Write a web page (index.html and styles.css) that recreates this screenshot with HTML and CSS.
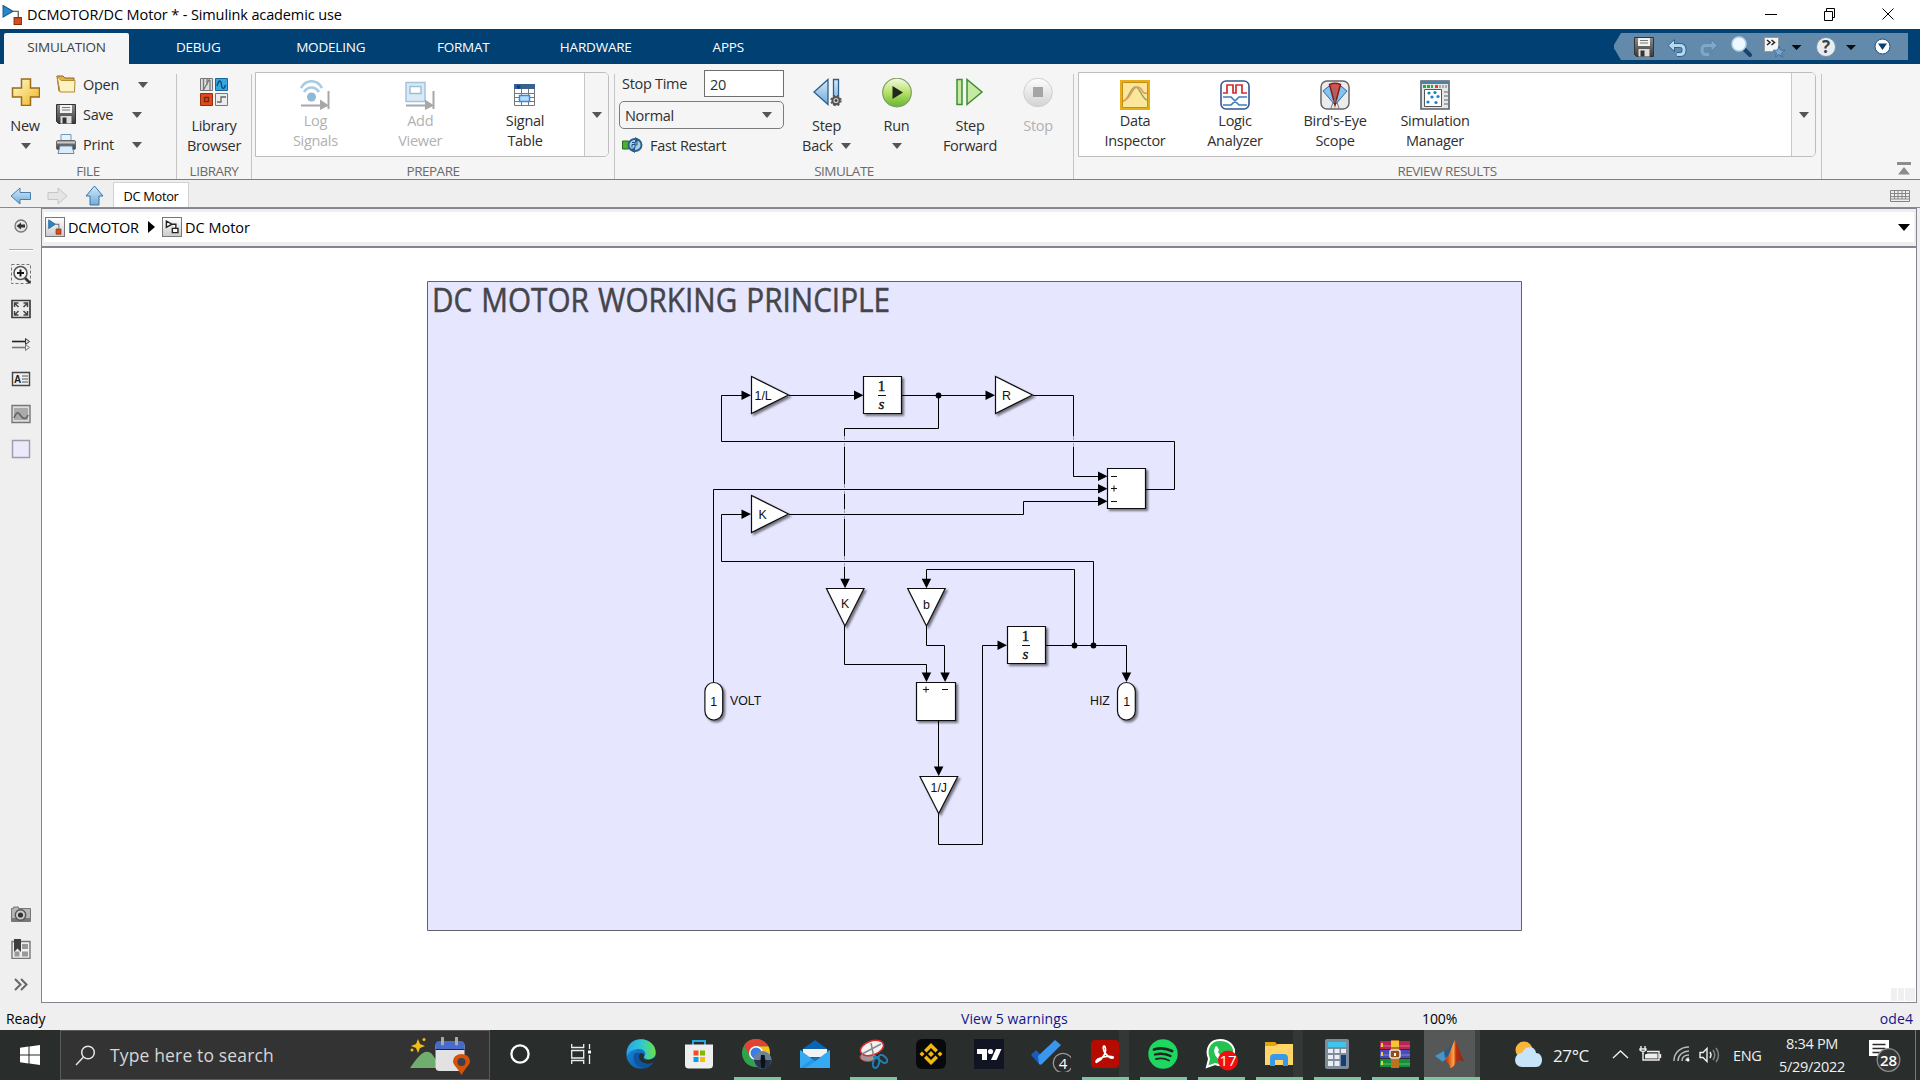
FILE: index.html
```html
<!DOCTYPE html>
<html lang="en">
<head>
<meta charset="utf-8">
<title>DCMOTOR/DC Motor * - Simulink academic use</title>
<link rel="stylesheet" href="styles.css">
</head>
<body>
<svg class="defs" width="0" height="0">
  <defs>
    <linearGradient id="gold" x1="0" y1="0" x2="1" y2="1"><stop offset="0" stop-color="#fffbd0"/><stop offset="1" stop-color="#eeb51c"/></linearGradient>
    <linearGradient id="blue" x1="0" y1="0" x2="0" y2="1"><stop offset="0" stop-color="#d3eafa"/><stop offset="1" stop-color="#71acd9"/></linearGradient>
    <linearGradient id="green" x1="0" y1="0" x2="0" y2="1"><stop offset="0" stop-color="#f4fbe4"/><stop offset=".5" stop-color="#b7e168"/><stop offset="1" stop-color="#63b82e"/></linearGradient>
    <linearGradient id="grey" x1="0" y1="0" x2="0" y2="1"><stop offset="0" stop-color="#fdfdfd"/><stop offset="1" stop-color="#d2d2d2"/></linearGradient>
    <linearGradient id="steel" x1="0" y1="0" x2="0" y2="1"><stop offset="0" stop-color="#8c8c8c"/><stop offset="1" stop-color="#3a3a3a"/></linearGradient>
    <linearGradient id="edge1" x1="0" y1="0" x2="1" y2="0"><stop offset="0" stop-color="#2aa5e6"/><stop offset=".5" stop-color="#2fc7d2"/><stop offset="1" stop-color="#69e04a"/></linearGradient>
    <linearGradient id="edge2" x1="0" y1="0" x2="1" y2="1"><stop offset="0" stop-color="#1690e4"/><stop offset="1" stop-color="#0c4f9c"/></linearGradient>
    <linearGradient id="mat" x1="0" y1="0" x2="1" y2="0"><stop offset="0" stop-color="#7d1d10"/><stop offset=".3" stop-color="#e65c1a"/><stop offset=".5" stop-color="#f9a64a"/><stop offset=".62" stop-color="#b8300f"/><stop offset="1" stop-color="#8c2010"/></linearGradient>
    <filter id="shadow" x="-20%" y="-20%" width="150%" height="150%"><feDropShadow dx="2" dy="2" stdDeviation="1.3" flood-color="#000" flood-opacity=".5"/></filter>
    <symbol id="floppy" viewBox="0 0 20 20"><path d="M.5.5h19v19h-17l-2-2z" fill="url(#steel)" stroke="#333"/><path d="M4 1h12v8H4z" fill="#f2f2f2"/><path d="M6 3.500h8M6 6h8" stroke="#777"/><path d="M4.500 12h11v7.500h-11z" fill="#ddd"/><path d="M6.500 13.500h4v6h-4z" fill="#333"/></symbol>
    <symbol id="model" viewBox="0 0 20 20"><path d="M1 1l9.500 5.500L1 12z" fill="#2a86c4" stroke="#15598c"/><path d="M10.500 6.500h5V12" fill="none" stroke="#666" stroke-width="1.300"/><path d="M11.500 12.500h7v6.500h-7z" fill="#d84d1c" stroke="#8a2d0c"/></symbol>
  </defs>
</svg>

<header class="titlebar">
  <svg class="app-icon" width="21" height="24" viewBox="0 0 20 20"><use href="#model"/></svg>
  <span class="title">DCMOTOR/DC Motor * - Simulink academic use</span>
  <svg class="controls" width="140" height="29" viewBox="0 0 140 29" fill="none" stroke="#000" stroke-width="1"><path d="M5 14.500h12M64.500 11.500h8v9h-8zM66.500 11.500v-3h8v9h-2M122.500 8.500l11 11M133.500 8.500l-11 11"/></svg>
</header>

<nav class="tabs">
  <div class="tab active">SIMULATION</div><div class="tab">DEBUG</div><div class="tab">MODELING</div><div class="tab">FORMAT</div><div class="tab">HARDWARE</div><div class="tab">APPS</div>
  <div class="quick">
    <svg width="294" height="27" viewBox="0 0 294 27">
      <path d="M7 0h287v27H7L-1 13.500z" fill="#6389ab"/>
      <use href="#floppy" x="20" y="4" width="20" height="20"/>
      <g fill="none" stroke="#2f6290" stroke-width="5"><path d="M58 12.500h8q4 0 4 4v1q0 4-4 4h-3"/></g>
      <path d="M60.500 6.500v12L54 12.500z" fill="#b5d8f1" stroke="#2f6290"/><path d="M58 12.500h8q4 0 4 4v1q0 4-4 4h-3" fill="none" stroke="#b5d8f1" stroke-width="3"/>
      <path d="M97 6.500v12l6.500-6z" fill="#80a7c8" stroke="#537fa6"/><path d="M99 12.500h-7q-4 0-4 4v1q0 4 4 4h3" fill="none" stroke="#80a7c8" stroke-width="3"/>
      <path d="M130 16l6 6" stroke="#18436e" stroke-width="4" stroke-linecap="round"/><circle cx="125" cy="11" r="7" fill="#eef8ff" stroke="#b4d2e8" stroke-width="1.500"/>
      <path d="M150.500 4.500h14v14h-14z" fill="#f5f5f5" stroke="#999"/><path d="M153 7l3 2.500-3 2.500M157.500 7l3 2.500-3 2.500" fill="none" stroke="#222" stroke-width="1.500"/><path d="M165 13l1.500 4 4.500.3-3.500 2.700 1 4-3.500-2.500-3.500 2.500 1-4-3.500-2.700 4.500-.3z" fill="#78a9d2" stroke="#3a658f" stroke-width=".8"/>
      <path d="M177.500 12h10l-5 5zM232 12h10l-5 5z" fill="#0b0b0b"/>
      <circle cx="212" cy="14" r="9.500" fill="#e9edf0" stroke="#7593ae"/><text x="212" y="20" text-anchor="middle" class="qmark">?</text>
      <circle cx="268.500" cy="13.500" r="7.500" fill="#fff" stroke="#1c4f80"/><path d="M264 10.500h9l-4.500 6.500z" fill="#0b3f70"/>
    </svg>
  </div>
</nav>

<section class="ribbon">
  <div class="group g-file">
    <div class="content">
      <button class="big new"><svg width="30" height="28" viewBox="0 0 30 28"><path d="M11.500 1h9v9h9v9h-9v8.500h-9V19h-9v-9h9z" fill="url(#gold)" stroke="#9b6b16" stroke-width="1.500"/></svg><span>New</span><i class="caret"></i></button>
      <div class="file-list">
        <div class="row"><svg width="20" height="18" viewBox="0 0 20 18"><path d="M1 1h6l2 2h9v13H3z" fill="#e3b24d" stroke="#8c651d"/><path d="M1 1l4 4.500h14L18.500 17H4z" fill="#fdf3c0" stroke="#b58a30"/></svg><span>Open</span><i class="caret wide"></i></div>
        <div class="row"><svg width="20" height="20"><use href="#floppy"/></svg><span>Save</span><i class="caret"></i></div>
        <div class="row"><svg width="20" height="20" viewBox="0 0 20 20"><path d="M5 .5h10v8H5z" fill="#e9f2fb" stroke="#6c9ac2"/><rect x=".5" y="6.500" width="19" height="9" rx="1.500" fill="url(#steel)" stroke="#666"/><path d="M1 7.500h18v2H1z" fill="#c9c9c9"/><path d="M4 12h12l2 7.500H2z" fill="#dcebf8" stroke="#5d8db6"/></svg><span>Print</span><i class="caret"></i></div>
      </div>
    </div>
    <div class="label">FILE</div>
  </div>

  <div class="group g-lib">
    <div class="content">
      <button class="big"><svg width="28" height="28" viewBox="0 0 28 28"><path d="M.5.500h12v12H.5z" fill="#dedede" stroke="#777"/><path d="M3.500 1v11l6-11M7 1v6M10 12V2" fill="none" stroke="#777" stroke-width="1.300"/><path d="M15.500.500h12v12h-12z" fill="#35a4e0" stroke="#15689e"/><path d="M17 8c2-7 4-6 4.500-1s3 4 4 0" fill="none" stroke="#0c4873" stroke-width="1.300"/><path d="M.5 15.500h12v12H.5z" fill="#dd4c1d" stroke="#942d0c"/><path d="M4.500 19.500h4v4h-4z" fill="none" stroke="#7d2409" stroke-width="1.300"/><path d="M15.500 15.500h12v12h-12z" fill="#ececec" stroke="#777"/><path d="M17 24h4v-5h5" fill="none" stroke="#666" stroke-width="1.300"/></svg><span>Library</span><span>Browser</span></button>
    </div>
    <div class="label">LIBRARY</div>
  </div>

  <div class="group g-prep">
    <div class="content">
      <div class="gallery">
        <button class="item off"><svg width="30" height="30" viewBox="0 0 30 30"><path d="M1 8C6-1 17-1 22 8M4 12c4-6 11-6 15 0" fill="none" stroke="#a9cae0" stroke-width="2.600"/><circle cx="11.500" cy="17" r="4.500" fill="#8fb8d6"/><path d="M1 25.500h22M28.500 11v18" stroke="#a7a7a7" stroke-width="2"/><path d="M20 19.500l9 6-9 4.500z" fill="#a7a7a7"/></svg><span>Log</span><span>Signals</span></button>
        <button class="item off"><svg width="30" height="30" viewBox="0 0 30 30"><path d="M1 2.500h19v19H1z" fill="#d8eaf5" stroke="#a5c3d9" stroke-width="1.500"/><path d="M5 6.500h11v7H5z" fill="#fff" stroke="#9dbfd8" stroke-width="1.500"/><path d="M1 25.500h22M28.500 11v18" stroke="#a7a7a7" stroke-width="2"/><path d="M20 19.500l9 6-9 4.500z" fill="#a7a7a7"/></svg><span>Add</span><span>Viewer</span></button>
        <button class="item"><svg width="24" height="30" viewBox="0 0 24 30"><path d="M1.500 4.500h20v21h-20z" fill="#fff" stroke="#777"/><path d="M1 4h21v5H1z" fill="#39618d"/><circle cx="5.500" cy="7" r="2" fill="#123a9c"/><path d="M2 13.500h20M2 17.500h20M2 21.500h20M8.500 9v16M15.500 9v16" stroke="#777"/><path d="M6.500 15.500h10v6h-10z" fill="#b7dcff" stroke="#338ae5" stroke-width="1.500"/></svg><span>Signal</span><span>Table</span></button>
        <div class="more"><i class="caret"></i></div>
      </div>
    </div>
    <div class="label">PREPARE</div>
  </div>

  <div class="group g-sim">
    <div class="content">
      <div class="form">
        <div class="stoptime"><span>Stop Time</span><div class="input">20</div></div>
        <div class="select"><span>Normal</span><i class="caret"></i></div>
        <div class="fast"><svg width="21" height="16" viewBox="0 0 21 16"><path d="M.5 4h6v8h-6z" fill="#49b32c" stroke="#24691a"/><ellipse cx="13" cy="8" rx="6.500" ry="6" fill="#acd0e6" stroke="#2b6090" stroke-width="2"/><path d="M13 0l5 3-5 3zM13 10l-5 3 5 3z" fill="#275c8c"/><path d="M10 5.500h3v2h-3v3M15 5v3h-2v3" stroke="#1d5180" fill="none"/></svg><span>Fast Restart</span></div>
      </div>
      <button class="big b-back"><svg width="30" height="30" viewBox="0 0 30 30"><path d="M16 1.500v25L2 14z" fill="url(#blue)" stroke="#2d5f8c" stroke-width="1.300"/><path d="M21.500 1.500h5v25h-5z" fill="url(#blue)" stroke="#2d5f8c" stroke-width="1.300"/><circle cx="24" cy="22.500" r="3.600" fill="#ccc" stroke="#555" stroke-width="2"/><circle cx="24" cy="22.500" r="5" fill="none" stroke="#555" stroke-width="1.400" stroke-dasharray="2 2"/><circle cx="24" cy="22.500" r="1.300" fill="#333"/></svg><span>Step</span><span>Back<i class="caret inline"></i></span></button>
      <button class="big b-run"><svg width="30" height="30" viewBox="0 0 30 30"><circle cx="15" cy="14.500" r="14.300" fill="url(#green)" stroke="#7f9c62" stroke-width="1.200"/><path d="M10.500 8l10.500 6.500L10.500 21z" fill="#1e2a1e"/></svg><span>Run</span><i class="caret"></i></button>
      <button class="big b-fwd"><svg width="30" height="30" viewBox="0 0 30 30"><path d="M2 1.500h5v25H2z" fill="#c6eaa2" stroke="#3f8d34" stroke-width="1.500"/><path d="M12 1.500v25L27 14z" fill="#c6eaa2" stroke="#3f8d34" stroke-width="1.500"/></svg><span>Step</span><span>Forward</span></button>
      <button class="big b-stop off"><svg width="30" height="30" viewBox="0 0 30 30"><circle cx="15" cy="14.500" r="14.300" fill="url(#grey)" stroke="#cfcfcf"/><path d="M10 9h10v10H10z" fill="#a5a5a5"/></svg><span>Stop</span></button>
    </div>
    <div class="label">SIMULATE</div>
  </div>

  <div class="group g-rev">
    <div class="content">
      <div class="gallery wide-gallery">
        <button class="item"><svg width="30" height="30" viewBox="0 0 30 30"><path d="M1 1h28v28H1z" fill="#fbe79b" stroke="#e5af17" stroke-width="2"/><path d="M2.500 2.500h25v25h-25z" fill="none" stroke="#c98b17"/><path d="M3 21C9 20 10 8 15 7s6 11 12 13" fill="none" stroke="#9aa56c" stroke-width="1.600"/><path d="M3 21c8-1 8-13 14-14s4 8 10 6" fill="none" stroke="#e59a58" stroke-width="1.600"/></svg><span>Data</span><span>Inspector</span></button>
        <button class="item"><svg width="30" height="30" viewBox="0 0 30 30"><rect x="1" y="1" width="28" height="28" rx="5" fill="#fff" stroke="#35568f" stroke-width="1.600"/><path d="M3 13h4V5h6v8h3V5h6v8h5" fill="none" stroke="#cc2d35" stroke-width="1.700"/><path d="M3 17h8l8 8h8M3 25h8l8-8h8" fill="none" stroke="#3c7dbd" stroke-width="1.700"/></svg><span>Logic</span><span>Analyzer</span></button>
        <button class="item"><svg width="30" height="30" viewBox="0 0 30 30"><rect x="1" y="1" width="28" height="28" rx="6" fill="#ececec" stroke="#666" stroke-width="1.500"/><path d="M15 25L3 11Q15-2 27 11z" fill="#80c4ef" stroke="#346b98"/><path d="M15 25L9.500 4.500Q15 2 20.500 4.500z" fill="#ce5555" stroke="#8b1919" stroke-width="1.500"/><path d="M14 20l-3 8M16 20l3 8M15 7v16" stroke="#777" fill="none"/></svg><span>Bird's-Eye</span><span>Scope</span></button>
        <button class="item"><svg width="30" height="30" viewBox="0 0 30 30"><path d="M1 1h28v28H1z" fill="#e6e6e6" stroke="#54616d" stroke-width="1.600"/><path d="M1 1h28v3H1z" fill="#4b82ac"/><path d="M3 6.500h10" stroke="#1cb333" stroke-width="3" stroke-dasharray="3 1"/><path d="M15 6.500h3" stroke="#e33d23" stroke-width="3"/><path d="M19 6.500h9" stroke="#aaa" stroke-width="3" stroke-dasharray="2 1"/><path d="M4.500 9.500h17v17h-17z" fill="#fff" stroke="#555"/><g fill="#1583cb"><circle cx="9" cy="13" r="1.600"/><circle cx="15" cy="12.500" r="1.600"/><circle cx="12" cy="17" r="1.600"/><circle cx="18" cy="16.500" r="1.600"/><circle cx="8" cy="22" r="1.600"/><circle cx="16" cy="22.500" r="1.600"/></g><path d="M24 12h4M24 16h4M24 20h4M24 24h4" stroke="#666"/></svg><span>Simulation</span><span>Manager</span></button>
        <div class="more"><i class="caret"></i></div>
      </div>
    </div>
    <div class="label">REVIEW RESULTS</div>
  </div>
  <svg class="collapse" width="14" height="14" viewBox="0 0 14 14" fill="#8c8c8c"><path d="M0 0h14v3H0zM7 5l6 7.500H1z"/></svg>
</section>

<div class="docbar">
  <svg class="nav-arrows" width="113" height="27" viewBox="0 0 113 27">
    <path d="M11 16l9-8v4.500h10.500v7H20V24z" fill="url(#blue)" stroke="#497fa9"/>
    <path d="M67 16l-9-8v4.500H48v7h10V24z" fill="#e5e5e5" stroke="#c6c6c6"/>
    <path d="M94.500 6l8.500 10h-4v9h-9v-9h-4z" fill="url(#blue)" stroke="#3975a3"/>
  </svg>
  <div class="doctab">DC Motor</div>
  <svg class="keyboard" width="20" height="12" viewBox="0 0 20 12" fill="none" stroke="#858585"><path d="M.5.500h19v11H.5zM.5 3.500h19M.5 6.500h19M.5 9h19M4.500 1v8M8 1v8M12 1v8M15.500 1v8"/></svg>
</div>

<main class="workspace">
  <aside class="palette">
    <svg class="p-hide" width="14" height="14" viewBox="0 0 14 14"><circle cx="7" cy="7" r="6" fill="#e4e4e4" stroke="#777" stroke-width="1.300"/><path d="M2.500 7L7 3.500v2h4v3H7v2z" fill="#333"/></svg>
    <div class="p-sep"></div>
    <svg width="20" height="20" viewBox="0 0 20 20"><path d="M.5.500h19v19H.5z" fill="none" stroke="#777" stroke-dasharray="3 2"/><path d="M13 13l6 6" stroke="#333" stroke-width="2.600"/><circle cx="9.500" cy="9" r="6.500" fill="#f5f5f5" stroke="#555" stroke-width="1.500"/><path d="M6 9h7M9.500 5.500v7" stroke="#111" stroke-width="1.900"/></svg>
    <svg width="20" height="20" viewBox="0 0 20 20"><path d="M1 1.500h18v17H1z" fill="#ececec" stroke="#3e3e3e" stroke-width="1.700"/><path d="M3.500 8V4h4M12.500 4h4v4M16.500 12v4h-4M7.500 16h-4v-4M3.500 4l4 4M16.500 4l-4 4M16.500 16l-4-4M3.500 16l4-4" fill="none" stroke="#444" stroke-width="1.500"/></svg>
    <svg width="20" height="20" viewBox="0 0 20 20"><path d="M1 7.500h14" stroke="#222" stroke-width="1.600"/><path d="M1 13.500h14" stroke="#777" stroke-width="1.600"/><path d="M14.500 4.500l4 3-4 3z" fill="#ddd" stroke="#333"/><path d="M14.500 10.500l4 3-4 3z" fill="#eee" stroke="#777"/></svg>
    <svg width="20" height="20" viewBox="0 0 20 20"><path d="M1.500 3.500h17v13h-17z" fill="#efefef" stroke="#444" stroke-width="1.400"/><text x="3" y="14" class="glyph-a">A</text><path d="M11 7h6M11 10h6M11 13h6" stroke="#555"/></svg>
    <svg width="20" height="20" viewBox="0 0 20 20"><path d="M1 1.500h18v17H1z" fill="#ddd" stroke="#777" stroke-width="1.400"/><path d="M3 4h14v12H3z" fill="#aaa"/><path d="M3 14c3-8 5-5 7-2s5 4 7-1" fill="none" stroke="#666" stroke-width="1.700"/></svg>
    <svg width="20" height="20" viewBox="0 0 20 20"><path d="M1.500 1.500h17v17h-17z" fill="#ebe9fa" stroke="#9c9caa" stroke-width="1.400"/></svg>
    <div class="p-fill"></div>
    <svg width="20" height="20" viewBox="0 0 20 20"><path d="M.5 4.500h2V3h5v1.500h12v13H.5z" fill="#b5b5b5" stroke="#777"/><path d="M1 14h18v3H1z" fill="#777"/><circle cx="9.500" cy="11" r="5.200" fill="#ccc" stroke="#555" stroke-width="1.400"/><circle cx="9.500" cy="11" r="2.600" fill="#333"/></svg>
    <svg width="20" height="20" viewBox="0 0 20 20"><path d="M1 2.500h18v17H1z" fill="#eee" stroke="#777" stroke-width="1.400"/><path d="M11 5h6v5h-6zM11 12.500h6v5h-6zM3.500 12.500h5v5h-5z" fill="#999"/><path d="M3 0h7v13l-3.500-3.500L3 13z" fill="#3d3d3d"/></svg>
    <svg width="20" height="20" viewBox="0 0 20 20"><path d="M4 5l5.500 5.500L4 16M10 5l5.500 5.500L10 16" fill="none" stroke="#666" stroke-width="2"/></svg>
  </aside>

  <div class="editor">
    <div class="crumbs">
      <div class="crumb-box">
        <span class="crumb-icon"><svg width="14" height="16" viewBox="0 0 20 20" preserveAspectRatio="none"><use href="#model" width="20" height="20"/></svg></span><span class="crumb c1">DCMOTOR</span>
        <i class="crumb-arrow"></i>
        <span class="crumb-icon"><svg width="14" height="14" viewBox="0 0 20 20" fill="#fff" stroke="#222" stroke-width="2"><path d="M2 1.500L10 6l-8 4.500zM10 6h5.500v6M10.500 12h8v6h-8z"/></svg></span><span class="crumb c2">DC Motor</span>
        <i class="crumb-drop"></i>
      </div>
    </div>
    <div class="canvas">
      <svg class="diagram" width="1874" height="754" viewBox="42 248 1874 754">
        <path d="M427.500 281.500h1094v649h-1094z" fill="#e6e6ff" stroke="#62626e"/>
        <text x="432" y="312" class="area-title" textLength="458" lengthAdjust="spacingAndGlyphs">DC MOTOR WORKING PRINCIPLE</text>
        <g class="wires">
          <path d="M745 395.500h-23.500M1174.500 441.500h-453v-46M1146 489.500h28.500v-48"/>
          <path d="M789 395.500h66M902 395.500h86M1033 395.500h40.500V436M1073.500 447v29.500h26"/>
          <path d="M938.500 395.500v33h-94V436M844.500 447v37M844.500 494v15M844.500 519v37M844.500 567v13"/>
          <path d="M713.500 683V489.500H1099"/>
          <path d="M789 514.500h234.500v-13H1099"/>
          <path d="M745 514.500h-23.500v47h372v84"/>
          <path d="M926.500 580v-10.500h148v76"/>
          <path d="M844.500 626v38.500h82V674M926.500 625v20.500h18V674"/>
          <path d="M938.500 721v48M938.500 813v31.500h44v-199H999M1046 645.500h80.500V674"/>
        </g>
        <g class="fades">
          <path d="M844.500 436v4M844.500 443v4M1073.500 436v4M1073.500 443v4M844.500 484v4M844.500 491v3M844.500 509v4M844.500 516v3M844.500 556v4M844.500 563v4"/>
        </g>
        <g class="heads">
          <path d="M741.500 390.500l9.500 4.800-9.500 4.800zM854 390.500l9.500 4.800-9.500 4.800zM985.500 390.500l9.500 4.800-9.500 4.800zM741.500 509.500l9.500 4.600-9.500 4.800zM1098 471.500l9.500 4.700-9.500 4.800zM1098 484l9.500 4.700-9.500 4.800zM1098 496.500l9.500 4.700-9.500 4.800zM997.500 640.500l9.500 4.700-9.500 4.800z"/>
          <path d="M840.300 578.800l4.800 9.500 4.700-9.500zM921.700 578.800l4.800 9.500 4.700-9.500zM921.700 672.500l4.800 9.500 4.700-9.500zM940.300 672.500l4.800 9.500 4.700-9.500zM933.900 766.500l4.800 9.500 4.700-9.500zM1121.700 672.500l4.800 9.500 4.700-9.500z"/>
          <circle cx="938.500" cy="395.500" r="2.900"/><circle cx="1074.500" cy="645.500" r="2.900"/><circle cx="1093.500" cy="645.500" r="2.900"/>
        </g>
        <g class="blocks" filter="url(#shadow)">
          <path d="M751.500 376.500v37l37-18.500zM995.500 376.500v37l37-18.500zM751.500 495.500v37l37-18.500z"/>
          <path d="M826.500 588.500h37.500l-19 37.500zM907.700 588.500h37.500l-18.700 37.500zM920 776.500h37.700l-19 37z"/>
          <path d="M863.500 376.500h38v37h-38zM1107.500 468.500h38v40h-38zM916.500 682.500h39v38h-39zM1007.500 626.500h38v37h-38z"/>
          <rect x="704.900" y="682.500" width="17.800" height="37.500" rx="8.900"/><rect x="1117.500" y="682.500" width="17.800" height="37.500" rx="8.900"/>
        </g>
        <g class="names">
          <text x="754.500" y="400">1/L</text><text x="1002" y="400">R</text><text x="758.500" y="519">K</text>
          <text x="841" y="608">K</text><text x="923" y="608.500">b</text><text x="930.500" y="791.500">1/J</text>
          <text x="710.300" y="706">1</text><text x="1123.300" y="706">1</text>
          <text x="730" y="705" class="port">VOLT</text><text x="1090" y="705" class="port">HIZ</text>
        </g>
        <g class="signs"><path d="M1111 476.500h6M1111 488.500h6M1114 485.500v6M1111 501.500h6M923 689.500h6M926 686.500v6M942 689.500h6"/></g>
        <g class="tf"><text x="881.500" y="391" class="light">1</text><text x="881.500" y="409" class="s light">s</text><path d="M878 395.500h8"/>
          <text x="1025.500" y="641" class="light">1</text><text x="1025.500" y="659" class="s light">s</text><path d="M1022 645.500h8"/></g>
        <path d="M1891 988h6v13h-6zM1898 988h6v13h-6zM1905 988h10v13h-10z" fill="#f0f0f0"/>
      </svg>
    </div>
  </div>
</main>

<footer class="status"><span class="s-ready">Ready</span><span class="s-warn">View 5 warnings</span><span class="s-zoom">100%</span><span class="s-solver">ode4</span></footer>

<div class="taskbar">
  <div class="start"><svg width="20" height="20" viewBox="0 0 20 20" fill="#fff"><path d="M0 2.800L8.500 1.600v8H0zM9.500 1.500L20 0v9.600H9.500zM0 10.500h8.500v8L0 17.200zM9.500 10.500H20V20L9.500 18.600z"/></svg></div>
  <div class="search">
    <svg class="s-glass" width="21" height="21" viewBox="0 0 21 21" fill="none" stroke="#e5e5e5" stroke-width="1.500"><circle cx="13" cy="7.500" r="6.300"/><path d="M8.500 12L1 20"/></svg>
    <span>Type here to search</span>
    <svg class="s-art" width="62" height="40" viewBox="0 0 62 40"><path d="M0 31C9 18 15 11 22 17l10 14z" fill="#6fae6f"/><path d="M8 2l2 5 5 2-5 2-2 5-2-5-5-2 5-2z" fill="#f1be13"/><circle cx="14" cy="2.500" r="1.500" fill="#f1be13"/><circle cx="2" cy="13" r="1.500" fill="#f1be13"/><rect x="25.500" y="5" width="29" height="29" rx="4" fill="#e2e2e2"/><path d="M25.500 12V8q0-4 4-4h21q4 0 4 4v4z" fill="#486bc9"/><path d="M25.500 12.500h29" stroke="#222"/><path d="M32.500 1v6M46.500 1v6" stroke="#aaa" stroke-width="3" stroke-linecap="round"/><path d="M51.500 38C47 30 43 28 43 24a8.500 7 0 0 1 17 0c0 4-4 6-8.500 14z" fill="#d95009"/><circle cx="51.500" cy="25" r="4" fill="#38424a"/></svg>
  </div>
  <div class="tasks">
    <div class="task"><svg width="20" height="20" viewBox="0 0 20 20"><circle cx="10" cy="10" r="8.600" fill="none" stroke="#fff" stroke-width="2.300"/></svg></div>
    <div class="task view"><svg width="20" height="20" viewBox="0 0 20 20" fill="none" stroke="#eee" stroke-width="1.300"><path d="M.7 0v3.500h12V0M.7 6.500h12v7.500H.7zM.7 20v-3.500h12V20M18.500 0v5M18.500 11v9"/><path d="M17 6.500h3v3h-3z" fill="#fff" stroke="none"/></svg></div>
    <div class="task"><svg width="30" height="30" viewBox="0 0 30 30"><circle cx="15" cy="15" r="14.700" fill="url(#edge2)"/><path d="M1 13C2 4 8 .3 15 .3 24 .3 30 7 29.700 14c-.3 5-5 7-9 6-3-.7-3-2-2-3 2-3-1-7-5-7C8 10 3 12 1 17z" fill="url(#edge1)"/><path d="M9 14c-4 6 1 15 10 15 4-1 7-3 9-6-8 4-15 0-15-5 0-2 1-3 2-4z" fill="#12539d"/><path d="M18 17c-2 3 2 5 7 3.500 2-.6 4-2 5-3.500l-2 6c-7 4-15 0-15-5 0-2 .6-3 2-4 2 0 3.500 1.500 3 3z" fill="#282c2a"/></svg></div>
    <div class="task"><svg width="30" height="30" viewBox="0 0 30 30"><path d="M9 7V2h12v5" fill="none" stroke="#26a7e0" stroke-width="2"/><path d="M1 5.500h28V26q0 3.500-4 3.500H5q-4 0-4-3.500z" fill="#eee"/><path d="M9.500 11.500h5v5h-5z" fill="#f04e23"/><path d="M16 11.500h5v5h-5z" fill="#7fba00"/><path d="M9.500 18h5v5h-5z" fill="#0a9fe8"/><path d="M16 18h5v5h-5z" fill="#fdb813"/></svg></div>
    <div class="task run"><svg width="32" height="32" viewBox="0 0 32 32"><circle cx="15" cy="15" r="14" fill="#2fa34c"/><path d="M3 7.500C9-1.500 22-1 27.500 8.500H15L9 18z" fill="#e34133"/><path d="M15 8.500h12.500c4 9-1 20-12.500 20.500L21 19z" fill="#fbc116"/><circle cx="15" cy="15" r="7" fill="#fff"/><circle cx="15" cy="15" r="5.500" fill="#3b7de8"/><circle cx="21.500" cy="22" r="9" fill="#6e819b"/><path d="M13 22h17c0 12-15 12-17 0z" fill="#26344c"/><path d="M20 17h3.500l1 6-1 7h-3l-1-7z" fill="#0d1118"/></svg></div>
    <div class="task"><svg width="30" height="30" viewBox="0 0 30 30"><path d="M0 12L15 1l15 11-15 10z" fill="#0b63b4"/><path d="M3 10h24v8H3z" fill="#f3f3f3"/><path d="M0 11l15 11L30 11v18H0z" fill="#35aaf0"/><path d="M0 29l15-11 4 2L5 29z" fill="#1a84d5" opacity=".5"/></svg></div>
    <div class="task run"><svg width="30" height="30" viewBox="0 0 30 30"><ellipse cx="10" cy="18" rx="8" ry="4.500" fill="#999" stroke="#c33"/><ellipse cx="14" cy="9" rx="12" ry="7" transform="rotate(-20 14 9)" fill="#f2f2f2" stroke="#d52c2c" stroke-width="1.500"/><path d="M13 4l3 15M4 15L23 5" stroke="#888" stroke-width="1.500"/><g fill="none" stroke="#1f81b8" stroke-width="2"><ellipse cx="18" cy="24" rx="3" ry="5" transform="rotate(15 18 24)"/><ellipse cx="25" cy="20" rx="3" ry="5" transform="rotate(-50 25 20)"/><path d="M15 18h6"/></g></svg></div>
    <div class="task"><svg width="30" height="30" viewBox="0 0 30 30"><rect width="30" height="30" rx="6" fill="#08090c"/><g fill="#f0b90b"><path d="M15 4l7 7-2.500 2.500L15 9l-4.500 4.500L8 11zM15 26l7-7-2.500-2.500L15 21l-4.500-4.500L8 19zM15 12l3 3-3 3-3-3zM6 12.500L8.500 15 6 17.500 3.500 15zM24 12.500l2.500 2.500-2.500 2.500-2.500-2.500z"/></g></svg></div>
    <div class="task"><svg width="30" height="30" viewBox="0 0 30 30"><path d="M0 0h30v30H0z" fill="#111523"/><g fill="#fff"><path d="M3 10h10v11H8v-6H3z"/><circle cx="16.500" cy="12.500" r="2.600"/><path d="M22 10h5.500L22.500 21H17z"/></g></svg></div>
    <div class="task"><svg width="48" height="36" viewBox="0 0 48 36"><path d="M8 19l5-5 8 8-5 6z" fill="#1a5bbc"/><path d="M16 28l-1-8L32 4l6 5-19 19q-1.500 1.500-3 0z" fill="#3b97eb"/><circle cx="40" cy="27" r="9.700" fill="#2b2b2b" stroke="#999" stroke-width="1.300"/><text x="40" y="32.500" class="badge">4</text></svg></div>
    <div class="task run dual"><svg width="28" height="28" viewBox="0 0 28 28"><rect width="28" height="28" rx="4" fill="#b50b00"/><path d="M6 22c6-3 10-10 8-15-1-2-3 0-1 4s6 8 9 7c2-2-7-3-15 1-3 2-2 4-1 3z" fill="none" stroke="#fff" stroke-width="1.700"/></svg></div>
    <div class="task run"><svg width="30" height="30" viewBox="0 0 30 30"><circle cx="15" cy="15" r="14.700" fill="#1ed760"/><g fill="none" stroke="#202522" stroke-linecap="round"><path d="M6 10.500q9-3 18 1.500" stroke-width="2.800"/><path d="M7 15.500q8-2 15.500 1.500" stroke-width="2.300"/><path d="M8 20q7-1.800 13 1.500" stroke-width="1.900"/></g></svg></div>
    <div class="task run"><svg width="38" height="34" viewBox="0 0 38 34"><path d="M5 30l2-8C3 12 8 3 18 3s15 7 14 14c-2 10-11 13-19 10z" fill="#22c350" stroke="#fff" stroke-width="2"/><path d="M13 10q2-2 3 1l1 2-1 2q2 4 5 5l2-1 3 2q-1 4-4 3-9-2-10-10z" fill="#fff"/><circle cx="26" cy="23.500" r="10" fill="#f40d0d"/><text x="26" y="29" class="badge">17</text></svg></div>
    <div class="task run dual"><svg width="28" height="26" viewBox="0 0 28 26"><path d="M0 1h10l3 3h14v10H0z" fill="#e5a50a"/><path d="M0 5h10l3-2h15v21H0z" fill="#ffd567"/><path d="M5 25v-8q0-4 4-4h10q4 0 4 4v8h-5v-6h-8v6z" fill="#3a98e8"/></svg></div>
    <div class="task run"><svg width="24" height="30" viewBox="0 0 24 30"><rect width="24" height="30" rx="2" fill="#7e8b99"/><path d="M3 3h18v5H3z" fill="#3cc6ee"/><path d="M3 10h5v4H3zM9.500 10h5v4h-5zM16 10h5v4h-5zM3 16h5v4H3zM9.500 16h5v4h-5zM3 22h5v5H3zM9.500 22h5v5h-5z" fill="#e8eef5"/><path d="M16 16h5v11h-5z" fill="#123e7c"/></svg></div>
    <div class="task run"><svg width="30" height="28" viewBox="0 0 30 28"><path d="M0 1h30v8H0z" fill="#bb2451"/><path d="M0 10h30v8H0z" fill="#4a4abb"/><path d="M0 19h30v8H0z" fill="#16903a"/><path d="M0 6h30M0 15h30M0 24h30" stroke="#fff" opacity=".35"/><path d="M2 3v4M2 12v4M2 21v4" stroke="#ecd337" stroke-width="2"/><path d="M11 0h8v28h-8z" fill="#bd721f"/><path d="M11 1h8v6h-8z" fill="#f0c538"/><rect x="10" y="10" width="10" height="8" rx="2" fill="#8f4f21" stroke="#e9e3d7" stroke-width="1.500"/><path d="M15 13v3" stroke="#fff" stroke-width="2"/></svg></div>
    <div class="task run current"><svg width="30" height="28" viewBox="0 0 30 28"><path d="M0 16l9-5 5 5-6 6z" fill="#4695c9"/><path d="M9 11q5-1 9-9l-4 14-4 2z" fill="#275a87"/><path d="M8 22C14 19 17 4 20 0c3 5 6 16 9 22-4-3-6-2-8 1-3 4-4 5-6 5 0-4-3-7-7-6z" fill="url(#mat)"/></svg></div>
  </div>
  <div class="tray">
    <svg class="weather" width="28" height="28" viewBox="0 0 28 28"><circle cx="9" cy="9" r="8.500" fill="#f8b43b"/><path d="M7 26a7 7 0 0 1 0-14c2-7 13-8 14 0 8 0 8 14 0 14z" fill="#c8e4f9"/></svg>
    <span class="temp">27°C</span>
    <svg class="sys" width="110" height="24" viewBox="0 0 110 24" fill="none" stroke="#eee" stroke-width="1.400"><path d="M1 15l7.500-7 7.500 7"/><path d="M35 8.500h12v8.500H31v-7M48.500 11v4"/><path d="M36 10.500h9.500v5H33v-4z" fill="#eee" stroke="none"/><path d="M29 3v3M33 3v3M28 6h6v1q-3 3-6 0zM31 8v3"/><g stroke="#bbb"><path d="M62 18C62 9 69 4 77 4M66 18c0-6 5-10 11-10M70 18c0-4 3-6 7-6M74 18q0-3 3-3"/></g><circle cx="76" cy="17" r="1.500" fill="#fff" stroke="none"/><path d="M88 9.500h3l4-4v13l-4-4h-3z"/><path d="M98 9q2 3 0 6" /><path d="M101 7q3.500 5 0 10M104 5q5 7 0 14" stroke="#888"/></svg>
    <span class="lang">ENG</span>
    <div class="clock"><span>8:34 PM</span><span>5/29/2022</span></div>
    <svg class="notif" width="36" height="34" viewBox="0 0 36 34"><path d="M2 2h20v16h-9l-3 4v-4H2z" fill="#fff"/><path d="M5.500 6.500h13M5.500 10.500h13M5.500 14.500h9" stroke="#2a2d2c" stroke-width="1.500"/><circle cx="21.500" cy="22" r="11.300" fill="#333635" stroke="#8c8c8c" stroke-width="1.300"/><text x="21.500" y="27.500" class="badge b28">28</text></svg>
    <div class="peek"></div>
  </div>
</div>
</body>
</html>
```
FILE: styles.css
```css
* { box-sizing: border-box; }
body { margin: 0; width: 1920px; height: 1080px; overflow: hidden; display: flex; flex-direction: column; background: #efefef; font-family: "Open Sans", "Noto Sans", sans-serif; font-size: 14px; color: #000; letter-spacing: -0.2px; }
svg { display: block; flex: none; }
svg text { letter-spacing: 0; }
.defs { position: absolute; }
span { white-space: nowrap; }
button { border: 0; padding: 0; background: none; font: inherit; color: inherit; letter-spacing: inherit; }

.titlebar { height: 29px; background: #fff; display: flex; align-items: center; padding-left: 2px; flex: none; }
.title { margin-left: 4px; font-size: 14.5px; letter-spacing: -0.12px; line-height: 29px; }
.controls { margin-left: auto; margin-right: 20px; }

.tabs { height: 35px; flex: none; background: #004073; display: flex; align-items: flex-end; padding-left: 4px; color: #fff; font-size: 13.5px; }
.tab { width: 132.5px; height: 31px; line-height: 28px; text-align: center; }
.tab.active { width: 125px; margin-right: 3px; background: #f5f5f5; color: #404040; border-radius: 2px 2px 0 0; }
.quick { margin-left: auto; margin-right: 12px; height: 31px; }
.qmark { font: bold 17px "Open Sans", sans-serif; fill: #345; }

.ribbon { height: 116px; flex: none; background: #f5f5f5; border-bottom: 1px solid #7d7d7d; padding-top: 10px; display: flex; color: #2f2f2f; font-size: 14.5px; letter-spacing: -0.3px; }
.group { height: 105px; border-right: 1px solid #c4c4c4; display: flex; flex-direction: column; flex: none; }
.content { height: 87px; flex: none; display: flex; align-items: flex-start; }
.label { height: 18px; text-align: center; color: #6b6b6b; font-size: 13.5px; line-height: 20px; letter-spacing: -0.5px; }
.g-file { width: 177px; }
.g-lib { width: 75px; }
.g-prep { width: 363px; }
.g-sim { width: 459px; }
.g-rev { width: 748px; }
.g-rev .label { margin-right: 1px; }
.caret { display: block; width: 0; height: 0; border: 5px solid transparent; border-top: 6px solid #555; border-bottom: 0; }
.caret.inline { display: inline-block; margin-left: 8px; vertical-align: 2px; }
.big { display: flex; flex-direction: column; align-items: center; padding-top: 4px; line-height: 20px; }
.big svg { margin-bottom: 10px; }
.big svg[height="30"] { margin-bottom: 8px; }
.big > .caret { margin-top: 7px; }
.new { width: 50px; }
.new .caret { margin-left: 1px; }
.g-lib .big { width: 74px; }
.off { color: #b1b1b1; }
.file-list { margin: -5px 0 0 6px; }
.row { height: 30px; display: flex; align-items: center; }
.row span { width: 49px; margin-left: 7px; }
.row .caret { margin-top: 1px; }
.row .caret.wide { margin-left: 6px; }
.gallery { margin: -2px 0 0 3px; width: 354px; height: 85px; background: #fff; border: 1px solid #bdbdbd; border-radius: 0 5px 5px 0; display: flex; padding-left: 7px; }
.item { width: 104.8px; flex: none; display: flex; flex-direction: column; align-items: center; padding-top: 7px; line-height: 20px; }
.item svg { margin-bottom: 1px; }
.more { margin-left: auto; width: 24px; border-left: 1px solid #c8c8c8; background: #f5f5f5; border-radius: 0 4px 4px 0; display: flex; align-items: center; justify-content: center; padding-top: 1px; }
.wide-gallery { width: 738px; margin-left: 4px; padding-left: 6px; }
.wide-gallery .item { width: 100px; }
.form { width: 169px; padding-left: 4px; margin-top: -4px; }
.stoptime { display: flex; height: 28px; padding-left: 3px; line-height: 28px; }
.input { margin-left: auto; width: 80px; height: 27px; border: 1px solid #6e6e6e; background: #fff; padding-left: 5px; line-height: 27px; }
.select { margin-top: 3px; height: 28px; border: 1px solid #7c7c7c; border-radius: 5px; display: flex; align-items: center; justify-content: space-between; padding: 0 11px 0 5px; }
.fast { margin-top: 1px; padding-left: 3px; height: 30px; display: flex; align-items: center; gap: 7px; }
.b-back { width: 85px; }
.b-run { width: 55px; }
.b-fwd { width: 92px; }
.b-stop { width: 44px; }
.collapse { margin: 88px 0 0 75px; }

.docbar { height: 28px; flex: none; display: flex; border-bottom: 1px solid #8b8b8f; }
.doctab { width: 76px; margin-top: 2px; background: #fff; border: 1px solid #d2d2d2; border-bottom: 0; text-align: center; font-size: 12.8px; letter-spacing: -0.3px; line-height: 26px; }
.keyboard { margin: 10px 10px 0 auto; }

.workspace { height: 795px; flex: none; display: flex; }
.palette { width: 41px; display: flex; flex-direction: column; align-items: center; padding-bottom: 9px; gap: 15px; }
.p-hide { margin: 11px 0 1px; }
.p-sep { width: 24px; height: 2px; border-top: 1px solid #aaa; border-bottom: 1px solid #fff; margin-bottom: -2px; }
.p-fill { flex: 1; }
.glyph-a { font: bold 10px "Liberation Sans", sans-serif; fill: #222; }
.editor { width: 1876px; border: 1px solid #858591; border-top: 0; display: flex; flex-direction: column; }
.crumbs { height: 40px; flex: none; border-top: 1px solid #858591; border-bottom: 2px solid #858591; background: #efefef; padding: 3px 2px 4px; }
.crumb-box { height: 30px; background: #fff; display: flex; align-items: center; padding-left: 1px; font-size: 14.5px; }
.crumb-icon { width: 20px; height: 20px; border: 1px solid #777; background: linear-gradient(#fff, #ccc); display: flex; align-items: center; justify-content: center; }
.crumb { margin-left: 3px; }
.c1 { width: 80px; letter-spacing: -0.2px; }
.crumb-arrow { border: 6px solid transparent; border-left: 7px solid #000; border-right: 0; margin-right: 7px; }
.c2 { letter-spacing: 0; }
.crumb-drop { margin-left: auto; margin-right: 4px; border: 6px solid transparent; border-top: 7px solid #000; border-bottom: 0; }
.canvas { flex: 1; background: #fff; }
.area-title { font: 33px "Open Sans", sans-serif; fill: #454549; stroke: #454549; stroke-width: .5; word-spacing: 1.5px; }
.wires { fill: none; stroke: #000; }
.fades { stroke: #000; stroke-opacity: .3; }
.blocks { fill: #fff; stroke: #111; stroke-width: 1.2; }
.names { font: 12.4px "Liberation Sans", Arial, sans-serif; fill: #111; }
.names .port { font-size: 12.3px; }
.signs { stroke: #111; fill: none; }
.tf { font: bold 15px "Liberation Serif", serif; text-anchor: middle; fill: #111; stroke: none; }
.tf path { stroke: #111; }
.tf .s { font-style: italic; }
.tf .light { font-weight: normal; stroke: #111; stroke-width: .35; }

.status { height: 27px; flex: none; display: flex; line-height: 31px; font-size: 14px; letter-spacing: -0.1px; padding: 0 7px 0 6px; }
.s-ready { width: 955px; }
.s-warn { width: 461px; color: #14148c; letter-spacing: 0.1px; }
.s-solver { margin-left: auto; color: #14148c; letter-spacing: 0.1px; }

.taskbar { height: 50px; flex: none; background: #292d2b; display: flex; color: #f0f0f0; }
.start { width: 60px; display: flex; align-items: center; justify-content: center; }
.search { width: 430px; background: #333; border: 1px solid #5a5a5a; display: flex; align-items: center; padding-left: 14px; font-size: 17.5px; letter-spacing: 0.15px; color: #d6d6d6; }
.search span { margin-left: 14px; }
.s-art { margin-left: auto; margin-right: 17px; margin-top: 4px; }
.tasks { display: flex; }
.task { width: 58px; height: 50px; display: flex; align-items: center; justify-content: center; border-bottom: 3px solid transparent; flex: none; }
.task:first-child { width: 60px; }
.task.view { width: 62px; }
.run { width: 47px; margin: 0 5.5px; border-bottom-color: #79c79b; }
.current { width: 56px; margin-right: 0; margin-left: 0; padding-right: 4px; background: linear-gradient(90deg, #555856 51px, #3e4240 51px); }
.dual { background: linear-gradient(90deg, transparent 37px, #333735 37px); }
.badge { font: 15px "Open Sans", sans-serif; fill: #fff; text-anchor: middle; }
.b28 { font-weight: 600; }
.tray { margin-left: auto; display: flex; align-items: center; }
.weather { margin-right: 10px; }
.temp { width: 59px; font-size: 17px; letter-spacing: -0.4px; }
.lang { width: 48px; margin-left: 11px; font-size: 14.5px; letter-spacing: -0.4px; }
.clock { width: 62px; display: flex; flex-direction: column; align-items: center; line-height: 23px; font-size: 14.5px; letter-spacing: -0.3px; }
.notif { margin-left: 24px; }
.peek { width: 5px; height: 50px; border-left: 1px solid #777; margin-left: 12px; }
```
